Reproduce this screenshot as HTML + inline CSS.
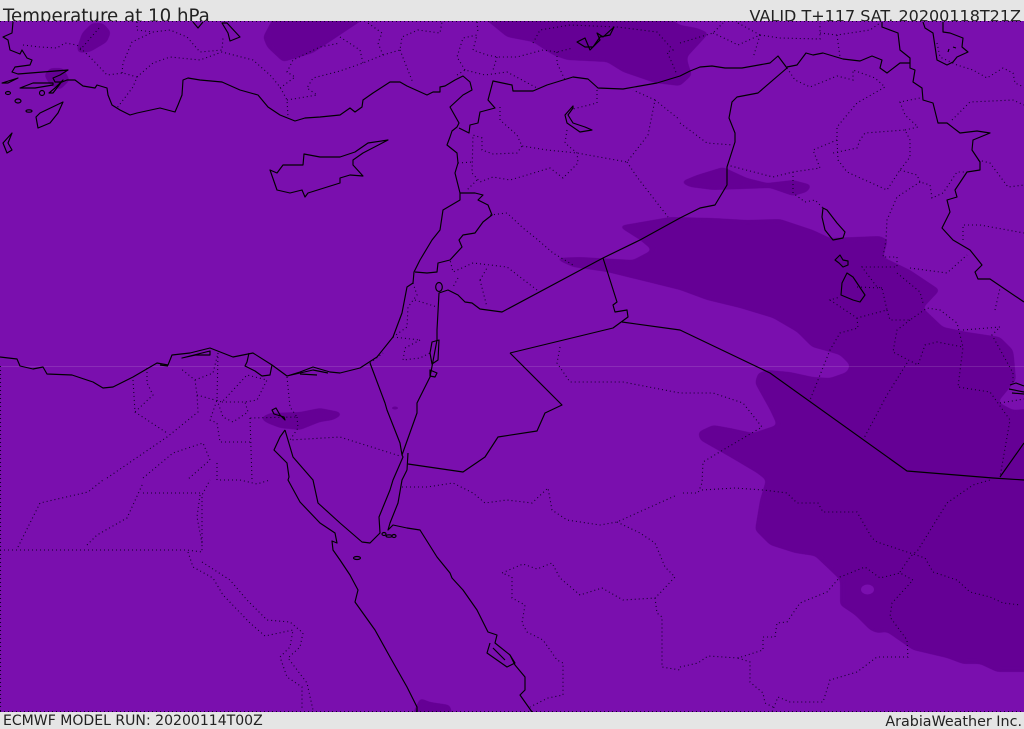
<!DOCTYPE html>
<html><head><meta charset="utf-8"><title>Temperature at 10 hPa</title>
<style>
html,body{margin:0;padding:0;background:#e5e5e5;width:1024px;height:729px;overflow:hidden}
svg{display:block}
text{font-family:"DejaVu Sans","Liberation Sans",sans-serif;fill:#222}
.d{fill:#650095;stroke:none}
.c{fill:none;stroke:#000;stroke-width:1.15;stroke-linejoin:round}
.b{fill:none;stroke:#12002a;stroke-width:1.1;stroke-dasharray:1 3}
</style></head><body>
<svg width="1024" height="729" viewBox="0 0 1024 729" xmlns="http://www.w3.org/2000/svg">
<defs>
<clipPath id="p"><rect x="0" y="21" width="1024" height="691"/></clipPath>
<filter id="s" filterUnits="userSpaceOnUse" x="-60" y="-60" width="1144" height="850" color-interpolation-filters="sRGB">
<feGaussianBlur stdDeviation="2.5"/>
<feComponentTransfer><feFuncA type="linear" slope="8" intercept="-3.5"/></feComponentTransfer>
</filter>
</defs>
<rect width="1024" height="729" fill="#e5e5e5"/>
<text x="3" y="22" font-size="18.2">Temperature at 10 hPa</text>
<text x="1021" y="21.5" font-size="16" text-anchor="end">VALID T+117 SAT. 20200118T21Z</text>
<text x="3" y="725" font-size="14.05">ECMWF MODEL RUN: 20200114T00Z</text>
<text x="1022" y="726" font-size="14.3" text-anchor="end">ArabiaWeather Inc.</text>
<g clip-path="url(#p)">
<rect x="0" y="21" width="1024" height="691" fill="#7a0fae"/>
<g class="d" filter="url(#s)">
<path d="M553 258L580 257L633 260L652 250L640 240L618 226L670 217L713 218L747 220L780 219L813 230L830 238L880 236L888 240L883 257L910 270L940 290L923 308L943 327L967 332L1000 337L1013 350L1014 357L1016 380L998 402L1013 410L1040 408L1040 672L997 672L980 664L963 664L947 658L930 654L913 650L887 632L877 633L870 630L855 615L840 605L840 580L835 575L815 556L795 553L770 545L755 530L760 500L766 480L757 473L730 457L700 440L698 432L713 425L730 428L753 433L777 425L770 410L755 383L758 373L768 370L790 372L813 377L830 378L847 372L850 365L840 355L823 350L812 347L797 332L773 318L740 308L707 300L680 290L607 272L573 267Z"/>
<path d="M680 182L697 175L723 167L747 178L767 183L793 180L812 185L807 192L793 196L770 188L743 189L713 190L690 187Z"/>
<path d="M468 5L507 37L533 42L553 55L567 60L607 62L623 72L655 83L680 86L692 75L688 63L687 57L700 43L709 33L697 28L680 25L650 5Z"/>
<path d="M280 5L263 37L267 47L283 62L313 53L340 35L385 5Z"/>
<path d="M77 48L82 33L92 23L103 23L111 32L107 42L90 52L78 53Z"/>
<path d="M44 75L50 68L63 68L70 80L60 90L50 85Z"/>
<path d="M260 418L270 413L300 412L320 408L340 412L342 415L333 420L320 422L300 430L280 428L267 423Z"/>
<path d="M405 730L420 698L430 702L450 705L456 730Z"/>
</g>
<ellipse cx="395" cy="408" rx="3" ry="1.5" fill="#650095"/>
<ellipse cx="867.5" cy="589.5" rx="6.5" ry="5" fill="#7a0fae"/>
<rect x="0" y="366" width="1024" height="1" fill="#fff" opacity=".12"/>
<g class="b">
<path d="M0 21.5H1024M0 711.5H1024M.5 366V712"/>
<path d="M23 45L40 47L57 48L65 43L77 45L90 57L107 75L123 73L137 77L133 87L117 108"/>
<path d="M137 22L137 30L153 32L170 30L187 37L200 52L222 50L223 38"/>
<path d="M122 73L123 63L132 42L153 32"/>
<path d="M137 77L153 63L170 57L200 60L222 52L253 60L270 75L280 87L287 100L288 117"/>
<path d="M80 50L100 27"/>
<path d="M280 88L295 77L287 72L293 60L320 47L340 43"/>
<path d="M287 100L317 95L307 88L313 78L340 71L363 63L383 55L378 43L382 33L368 23"/>
<path d="M340 37L360 50L363 63M383 55L400 50L402 37L418 30L440 33L442 22M400 50L413 83"/>
<path d="M457 75L465 70L485 75L507 72L537 88M465 70L457 57L463 38L477 35L473 50L487 55L497 57L517 57L543 50L557 52L573 48M497 57L493 70M557 52L557 63L565 80M477 22L478 33"/>
<path d="M533 43L540 30L570 25L617 27L657 32L673 50L667 52L673 65L677 75"/>
<path d="M500 107L500 120L517 135L522 146L547 150L577 153L627 162L648 135L655 100L633 90M655 100L680 120M627 162L637 177L668 217"/>
<path d="M597 90L597 103L573 109M567 130L565 143L577 153L578 163L563 178L550 168L527 175L510 180L493 177L480 182L472 173L473 135L482 138L482 150L493 154L517 153L522 146"/>
<path d="M458 163L473 162M477 180L467 190M490 215L507 213L523 228L538 240L553 253L573 265"/>
<path d="M537 290L507 267L473 263L453 272L450 260M480 280L487 268M480 280L487 307"/>
<path d="M413 283L417 295L408 307L407 327L393 337M420 340L405 348L403 360L420 358L430 353M415 300L437 307M370 363L383 353M458 278L453 287M393 337L420 340"/>
<path d="M560 347L557 363L570 382L623 382L680 393L713 393L743 403L762 427L723 450L703 462L702 483L698 493L680 493M702 490L735 488L763 490L787 493L797 503L818 503L823 512L857 512L872 538L877 542L907 552L925 558L933 572L957 580L970 592L990 597L1003 603L1021 605"/>
<path d="M680 667L698 663L708 656L738 658L763 650L763 637L775 637L777 623L787 622L800 603L827 592L840 577L865 567L880 578L900 573L913 580L892 603L890 617L907 640L908 657L877 657L857 672L830 680L823 702L790 702L778 697L772 712M738 658L750 662L750 682L763 693L765 703L773 707"/>
<path d="M900 572L910 557L918 550L947 503L973 485L990 480"/>
<path d="M402 487L427 487L453 483L473 493L485 503L507 500L532 503L548 488L552 510L567 520L600 525L617 522L677 495M617 522L640 533L655 543L665 567L675 577L660 593L655 598L623 600L602 588L580 595L560 578L552 563L537 569L523 564L502 573L512 577L512 598L525 605L522 623L527 632L543 640L557 660L563 663L563 695L548 698L530 707M655 598L657 613L662 617L662 667L680 670"/>
<path d="M0 550L187 550L202 552L202 495L210 480M18 547L40 503L88 492L103 480M87 545L97 535L127 518L143 483M143 493L200 493M200 495L197 517L202 543"/>
<path d="M188 552L193 567L213 578L223 595L250 623L265 636L293 630L290 647L280 657L287 677L302 687L302 710M202 562L230 580L247 600L267 620L290 622L303 633L300 647L288 658L307 683L313 710"/>
<path d="M107 478L167 437L198 412L197 395L195 380L180 368M133 380L135 412L167 433M147 368L147 383L153 395L135 412"/>
<path d="M195 380L213 373L218 353L217 400L210 420L217 423L220 442L252 442M197 395L222 402L247 375L267 380L257 400L245 402L222 402M217 400L223 417L233 422L248 412L245 402M250 418L252 480M297 417L298 428L290 440L340 437L343 438L400 456M287 377L290 407L297 417L250 418"/>
<path d="M143 478L173 453L203 443L210 460L187 480M217 463L217 480L240 480L257 484L270 480"/>
<path d="M680 43L713 33L718 28L723 23M738 23L760 35L738 45L728 40L713 33M760 35L780 38L820 39L820 23M820 33L837 35L870 30L880 23M837 35L840 57M760 35L753 58"/>
<path d="M787 68L795 80L810 87L837 76L853 80L853 70L875 78L885 87L857 103L837 127L837 140L813 150L820 168L793 172L773 177L727 165M793 172L793 193L805 202L815 200L823 208"/>
<path d="M680 123L707 143L733 145"/>
<path d="M837 140L838 160L847 172L887 190L900 170L910 157L910 140L905 130L865 133L860 140L857 148L833 153M905 130L918 127L905 115L900 102L920 98"/>
<path d="M900 170L917 175L920 182L930 185L932 198L943 193L957 172L967 172M920 182L897 197L887 220L886 240L883 257L897 257L897 267L862 267L877 287L882 288L887 310L857 318L830 300L840 297M857 287L882 288M857 318L858 328L840 333L830 350L810 400"/>
<path d="M887 310L890 320L910 320L927 308L940 310L957 323L963 347L958 387L990 392L1010 420L1000 477M897 273L920 292L923 303M910 268L947 273L967 255"/>
<path d="M910 320L897 330L893 352L918 365L925 345L937 342L963 347M907 363L887 395L863 440"/>
<path d="M963 330L1000 327L992 335L1013 373L1013 383M995 310L1000 288M1000 403L1024 399"/>
<path d="M952 120L970 102L1013 100L1024 105M978 160L990 163L1008 187L1024 185"/>
<path d="M937 43L940 57L957 65L973 70L987 78L1003 68L1013 73L1015 83L1024 87M963 240L963 225L980 225L1024 233"/>
</g>
<g class="c">
<path d="M13 22L12 33L3 37L8 40L10 50L20 54L22 50L27 58L32 60L30 65L15 67L12 72L18 74L68 70L60 75L53 78L55 82L62 82L67 80L75 80L83 86L95 88L97 85L107 88L108 95L112 105L120 110L130 115L137 113L160 108L175 112L178 105L182 95L183 80L188 78L200 80L222 82L240 90L258 95L268 107L280 115L295 121L305 118L320 117L340 115L350 108L355 112L362 107L363 100L373 93L390 82L400 82L407 86L427 95L433 92L440 92L440 87L445 86L455 80L463 76L470 82L472 90L463 95L450 107L459 123L457 127L452 131L450 137L447 145L457 153L458 163L455 173L460 193L460 200L443 210L440 230L432 240L420 260L414 272L413 283L407 287L402 313L393 337L377 357L360 368L340 373L330 372L313 367L300 372L287 376L272 365L253 353L233 357L210 348L190 353L172 355L168 365L157 363L133 377L113 387L103 388L93 382L72 375L47 374L43 367L33 369L20 366L17 359L0 357"/>
<path d="M182 358L210 351L210 355L196 355L182 358ZM249 353L247 362L245 366L255 371L262 376L270 375L272 365M287 376L313 370L328 373M300 374L317 375M160 365L168 366"/>
<path d="M272 410L276 408L280 415L285 420L284 417L274 414Z"/>
<path d="M285 430L280 437L274 450L287 463L289 477L288 480L300 502L320 523L335 533L337 543L332 541L333 550L340 560L350 575L358 590L355 602L375 630L390 657L407 687L417 707L417 712"/>
<path d="M285 430L293 457L313 480L318 503L340 523L362 542L370 543L380 533L379 517L390 490L393 480L403 457L402 455"/>
<path d="M370 363L385 403L387 410L400 443L402 455L417 413L417 403L430 377L437 340L437 330L439 293L448 290L458 295L465 302L472 303L480 309L502 312L603 258L640 240L680 218L700 208L715 205L727 185L727 167L735 142L735 133L729 118L732 102L737 97L758 93L787 68L778 56L770 63L742 68L725 68L712 66L700 67L690 71L680 76L657 83L623 89L598 88L588 79L573 77L547 85L533 91L513 91L512 85L493 81L488 100L495 108L480 112L478 123L470 125L469 133L459 128"/>
<path d="M787 67L797 65L806 53L813 55L823 53L843 59L860 61L872 56L882 60L880 68L887 73L900 63L910 63"/>
<path d="M882 22L882 27L898 33L900 50L910 58L910 68L915 70L913 82L922 88L923 100L933 103L938 123L947 123L960 133L977 131L990 133L973 140L972 150L980 162L980 170L967 172L955 190L957 197L947 200L950 212L942 228L953 240L970 250L982 265L975 272L978 279L990 279L1024 302"/>
<path d="M923 22L925 28L933 33L937 60L947 65L953 62L957 57L968 52L962 47L963 38L950 33L943 32L943 22M948 52L949 49M953 47L956 48"/>
<path d="M577 42L585 38L590 50L600 40L597 33L603 37L614 27L610 35L600 37L593 47L585 47Z"/>
<path d="M573 106L565 115L567 123L580 132L592 130L585 127L573 123L568 115L573 108Z"/>
<path d="M460 193L475 193L483 195L478 200L488 205L492 215L483 222L475 233L463 235L459 240L462 247L450 260L438 263L437 272L427 273L415 272"/>
<path d="M430 353L432 342L439 340L438 360L432 364ZM430 370L437 373L435 377L430 376Z"/>
<ellipse cx="439" cy="287" rx="3.3" ry="4.5"/>
<path d="M510 353L613 328L628 317L627 310L615 312L613 305L617 302L603 258M622 322L680 330L770 373L907 471L993 478L1024 480M1000 477L1024 443M510 353L562 405L545 413L537 431L498 437L485 457L463 472L408 464"/>
<path d="M270 170L277 190L290 193L302 190L305 197L308 193L340 183L340 178L350 175L363 176L353 165L353 160L363 153L388 140L368 143L355 152L340 157L320 157L304 154L303 165L283 165L277 173Z"/>
<path d="M63 102L40 113L36 117L38 128L50 123L58 113ZM12 133L3 143L7 153L12 150L8 143ZM2 83L18 78L8 83ZM20 88L33 83L53 83L53 85L35 88ZM63 80L55 88L49 93L53 93ZM193 22L198 28L203 22M222 23L227 23L240 37L230 41L228 33Z"/>
<ellipse cx="42" cy="93" rx="2.5" ry="2.5"/><ellipse cx="8" cy="93" rx="2.5" ry="1.5"/><ellipse cx="18" cy="101" rx="3" ry="2"/><ellipse cx="29" cy="111" rx="3" ry="1.2"/>
<path d="M407 470L402 480L398 503L390 523L388 530L393 525L407 528L420 530L437 557L450 573L452 578L463 590L477 610L488 632L497 635L495 643L510 655L515 665L525 677L525 690L520 695L532 712M408 453L407 470"/>
<path d="M490 643L487 653L507 667L515 663L510 655M493 648L505 660"/>
<ellipse cx="357" cy="558" rx="3.5" ry="1.5"/><ellipse cx="384" cy="534" rx="2" ry="1.5"/><ellipse cx="389" cy="536" rx="3" ry="1.2"/><ellipse cx="394" cy="536" rx="2" ry="1.5"/>
<path d="M835 260L840 255L843 260L848 261L848 265L843 267L839 263ZM847 273L842 283L841 295L853 300L860 302L865 295L853 277ZM823 208L822 217L825 230L833 240L843 238L845 232L837 223L827 210Z"/>
<path d="M1010 385L1016 383L1024 386M1009 389L1024 392M1012 393L1024 394"/>
</g>
</g>
</svg>
</body></html>
